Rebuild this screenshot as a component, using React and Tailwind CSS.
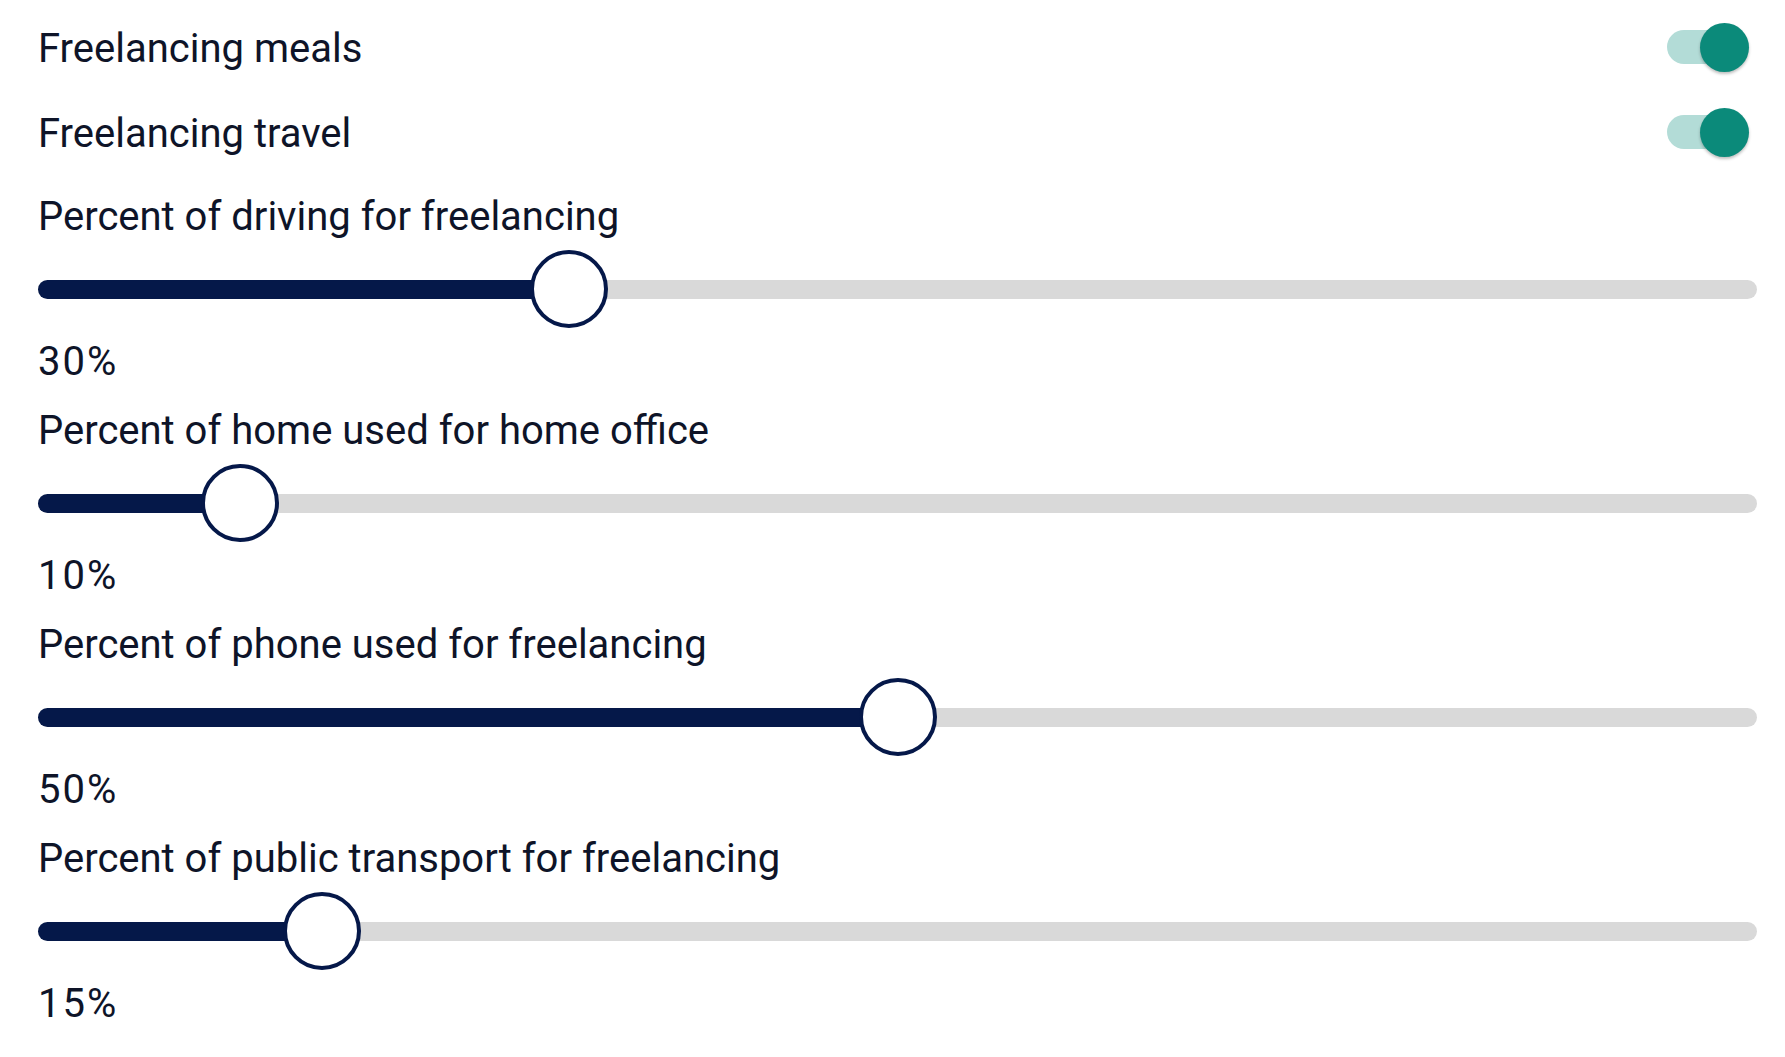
import { useState } from "react";

const toggles = [
  { id: "meals", label: "Freelancing meals" },
  { id: "travel", label: "Freelancing travel" },
];

const sliders = [
  { id: "driving", label: "Percent of driving for freelancing", value: 30 },
  { id: "home", label: "Percent of home used for home office", value: 10 },
  { id: "phone", label: "Percent of phone used for freelancing", value: 50 },
  { id: "transport", label: "Percent of public transport for freelancing", value: 15 },
];

function Toggle({ on, onClick }) {
  return (
    <button
      onClick={onClick}
      className="relative w-[82px] h-[48px] flex items-center -mt-[3px]"
    >
      <span
        className={`w-[78px] h-[34px] rounded-full ${on ? "bg-[#b3dcd7]" : "bg-[#d0d0d0]"}`}
      ></span>
      <span
        className={`absolute top-0 w-[49px] h-[49px] rounded-full shadow-[0_2px_3px_rgba(0,0,0,0.25)] ${
          on ? "right-0 bg-[#0b8a7a]" : "left-0 bg-white"
        }`}
      ></span>
    </button>
  );
}

function Slider({ value }) {
  // thumb stays inside the track, like a native range input
  const pos = `calc(38px + (100% - 76px) * ${value / 100})`;
  return (
    <div className="relative h-[80px] flex items-center">
      <div className="w-full h-[19px] rounded-full bg-[#d9d9d9]"></div>
      <div
        className="absolute left-0 h-[19px] rounded-full bg-[#051849]"
        style={{ width: pos }}
      ></div>
      <div
        className="absolute top-[1px] w-[78px] h-[78px] -ml-[39px] rounded-full bg-white border-[4px] border-[#051849]"
        style={{ left: pos }}
      ></div>
    </div>
  );
}

export default function App() {
  const [flags, setFlags] = useState({ meals: true, travel: true });

  return (
    <div className="w-[1785px] h-[1057px] bg-white text-[#0e1428] font-['Roboto',sans-serif] text-[40px] leading-[48px] pl-[38px] pr-[28px] pt-[6px]">
      {toggles.map((t) => (
        <div key={t.id} className="h-[85px] flex items-center justify-between pr-[8px]">
          <span>{t.label}</span>
          <Toggle
            on={flags[t.id]}
            onClick={() => setFlags({ ...flags, [t.id]: !flags[t.id] })}
          />
        </div>
      ))}
      <div className="flex flex-col mt-[17px]">
        {sliders.map((s) => (
          <div key={s.id} className="flex flex-col pb-[21px]">
            <span>{s.label}</span>
            <div className="mt-[8px]">
              <Slider value={s.value} />
            </div>
            <span className="mt-[9px] tracking-[2px]">{s.value}%</span>
          </div>
        ))}
      </div>
    </div>
  );
}
